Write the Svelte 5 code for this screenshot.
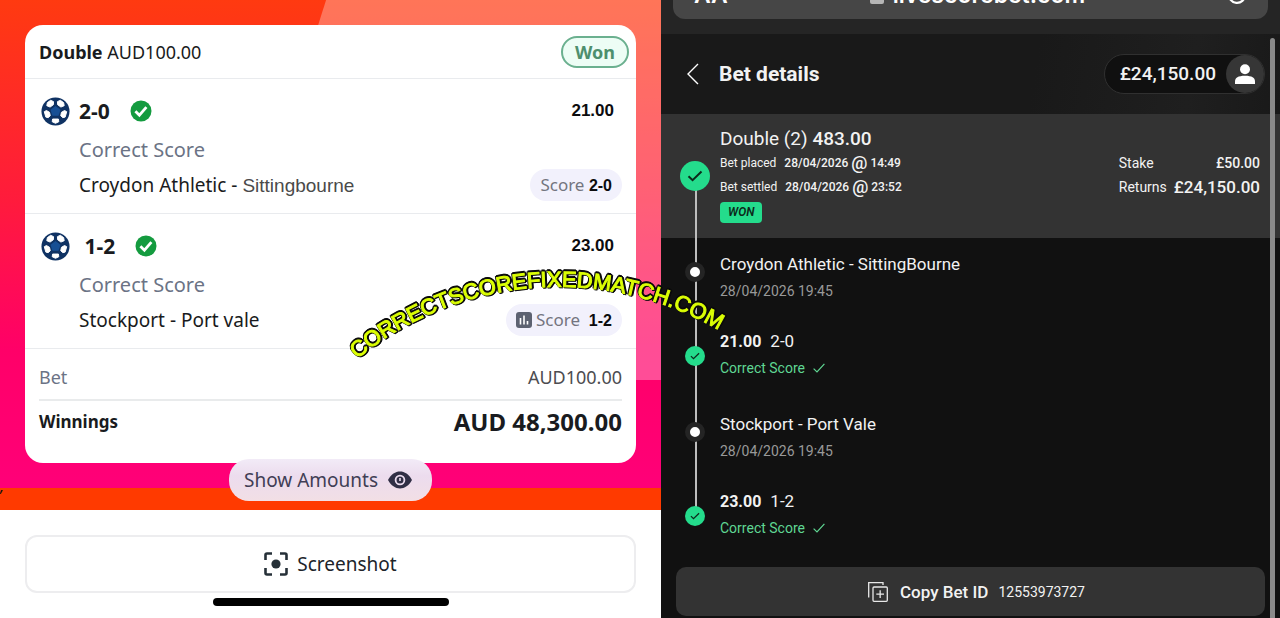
<script>
  const legs = [
    { pick: '2-0', odds: '21.00', home: 'Croydon Athletic -', away: 'Sittingbourne', score: '2-0', stats: false },
    { pick: '\u00a01-2', odds: '23.00', home: 'Stockport - Port vale', away: '', score: '\u00a01-2', stats: true }
  ];
  const events = [
    { name: 'Croydon Athletic - SittingBourne', time: '28/04/2026 19:45', odds: '21.00', pick: '2-0' },
    { name: 'Stockport - Port Vale', time: '28/04/2026 19:45', odds: '23.00', pick: '1-2' }
  ];
</script>

<main class="page">
  <section class="slip">
    <div class="stage">
      <span class="mark">,</span>
      <article class="card">
        <header class="card-head">
          <p><b>Double</b> AUD100.00</p>
          <span class="won">Won</span>
        </header>
        {#each legs as leg}
          <div class="leg">
            <div class="leg-top">
              <svg class="ball" viewBox="0 0 30 30" aria-hidden="true">
                <circle cx="15" cy="15" r="14.5" fill="#0f3263" />
                <g fill="#fff" stroke="#fff" stroke-width="1" stroke-linejoin="round">
                  <path d="M6.600 5.800 10 3.400 13 4.800 12.800 8 9.400 10.400 6 9Z" />
                  <path d="M23.400 5.800 20 3.400 17 4.800 17.200 8 20.600 10.400 24 9Z" />
                  <path d="M3.400 15.200 5.600 14 8.800 15.800 9.600 19.400 7.400 21.400 5 20.800Z" />
                  <path d="M26.600 15.200 24.400 14 21.200 15.800 20.400 19.400 22.600 21.400 25 20.800Z" />
                  <path d="M12 22.800H18L18.400 25.600 15 27.200 11.600 25.600Z" />
                </g>
                <path d="M15 9.400 20.200 13.200 18.200 19.400H11.800L9.800 13.200Z" fill="#174f94" />
              </svg>
              <strong class="pick">{leg.pick}</strong>
              <svg class="tick" viewBox="0 0 22 22" aria-hidden="true">
                <circle cx="11" cy="11" r="10.5" fill="#149b3f" />
                <path d="M5.400 11.200 9.400 15.200 16.400 7.200" fill="none" stroke="#fff" stroke-width="2.800" />
              </svg>
              <strong class="odds">{leg.odds}</strong>
            </div>
            <p class="market">Correct Score</p>
            <div class="leg-foot">
              <p class="teams">{leg.home} {#if leg.away}<span>{leg.away}</span>{/if}</p>
              <span class="score">
                {#if leg.stats}
                  <svg viewBox="0 0 16 16" aria-hidden="true">
                    <rect width="16" height="16" rx="3" fill="#5d6271" />
                    <path d="M4.500 6v6.500M8 3.500v9M11.500 9v3.500" stroke="#fff" stroke-width="1.600" />
                  </svg>
                {/if}
                <span>Score <b>{leg.score}</b></span>
              </span>
            </div>
          </div>
        {/each}
        <dl class="totals">
          <div class="bet"><dt>Bet</dt><dd>AUD100.00</dd></div>
          <div class="winnings"><dt>Winnings</dt><dd>AUD 48,300.00</dd></div>
        </dl>
      </article>
      <button class="amounts" type="button">
        Show Amounts
        <svg viewBox="0 0 24 18" aria-hidden="true">
          <path d="M0 9C3 3.200 7.500.6 12 .6S21 3.200 24 9c-3 5.800-7.500 8.400-12 8.400S3 14.800 0 9Z" fill="#302f45" />
          <circle cx="12" cy="9" r="4.400" fill="#302f45" stroke="#eadcee" stroke-width="1.800" />
          <path d="M12 7v3" stroke="#eadcee" stroke-width="1.600" />
        </svg>
      </button>
    </div>
    <footer class="actions">
      <button class="shot" type="button">
        <svg viewBox="0 0 24 24" aria-hidden="true">
          <path d="M1.500 8V3q0-1.500 1.500-1.500H8M16 1.500h5q1.500 0 1.500 1.500V8M22.500 16v5q0 1.500-1.500 1.500h-5M8 22.500H3q-1.500 0-1.500-1.500v-5" fill="none" stroke="#263038" stroke-width="2.600" />
          <circle cx="12" cy="12" r="4.600" fill="#263038" />
        </svg>
        Screenshot
      </button>
      <div class="home-bar"></div>
    </footer>
  </section>

  <section class="details">
    <div class="browser">
      <div class="address">
        <span>AA</span>
        <span class="host">
          <svg viewBox="0 0 14 18" aria-hidden="true">
            <path d="M3.500 8V5a3.500 3.500 0 0 1 7 0v3" fill="none" stroke="#b5b5b5" stroke-width="2" />
            <rect y="8" width="14" height="10" rx="2" fill="#b5b5b5" />
          </svg>
          livescorebet.com
        </span>
        <svg class="reload" viewBox="0 0 20 20" aria-hidden="true">
          <path d="M12 2.200A8 8 0 1 0 18 10" fill="none" stroke="#fff" stroke-width="2.200" />
        </svg>
      </div>
    </div>
    <header class="bar">
      <button class="back" type="button" aria-label="Back">
        <svg viewBox="0 0 12 22" aria-hidden="true"><path d="M11 1 1 11 11 21" fill="none" stroke="#fff" stroke-width="1.400" /></svg>
      </button>
      <h1>Bet details</h1>
      <button class="balance" type="button">
        £24,150.00
        <span class="avatar">
          <svg viewBox="0 0 20 20" aria-hidden="true">
            <circle cx="10" cy="5.300" r="5" fill="#fff" />
            <path d="M0 20v-2.500c0-3.600 3-5.700 10-5.700s10 2.100 10 5.700V20Z" fill="#fff" />
          </svg>
        </span>
      </button>
    </header>
    <div class="row summary">
      <span class="node big">
        <svg viewBox="0 0 16 12" aria-hidden="true"><path d="M1.500 6.200 5.600 10.200 14.500 1.500" fill="none" stroke="#0c2a1b" stroke-width="2" /></svg>
      </span>
      <div class="facts">
        <h2>Double (2) <b>483.00</b></h2>
        <p><span>Bet placed</span><b>28/04/2026 <i>@</i> 14:49</b></p>
        <p><span>Bet settled</span><b>28/04/2026 <i>@</i> 23:52</b></p>
        <em>WON</em>
      </div>
      <dl class="money">
        <dt>Stake</dt><dd>£50.00</dd>
        <dt>Returns</dt><dd class="large">£24,150.00</dd>
      </dl>
    </div>
    {#each events as ev}
      <div class="row event">
        <span class="node dot"></span>
        <div>
          <h3>{ev.name}</h3>
          <p class="time">{ev.time}</p>
        </div>
      </div>
      <div class="row outcome">
        <span class="node small">
          <svg viewBox="0 0 16 12" aria-hidden="true"><path d="M1.500 6.200 5.600 10.200 14.500 1.500" fill="none" stroke="#0c2a1b" stroke-width="2" /></svg>
        </span>
        <div>
          <h3><b>{ev.odds}</b>{ev.pick}</h3>
          <p class="result">
            Correct Score
            <svg viewBox="0 0 12 10" aria-hidden="true"><path d="M.6 5.600 4 9 11.400.8" fill="none" stroke="#5fd793" stroke-width="1.200" /></svg>
          </p>
        </div>
      </div>
    {/each}
    <button class="copy" type="button">
      <svg viewBox="0 0 20 20" aria-hidden="true">
        <path d="M.7 15.500V.7H15V3" fill="none" stroke="#e8e8e8" stroke-width="1.300" />
        <rect x="5" y="5" width="14.300" height="14.300" rx="1" fill="none" stroke="#e8e8e8" stroke-width="1.300" />
        <path d="M12.150 8.300v7.700M8.300 12.150h7.700" stroke="#e8e8e8" stroke-width="1.300" />
      </svg>
      <b>Copy Bet ID</b>
      <span>12553973727</span>
    </button>
    <div class="scroll"></div>
  </section>

  <svg class="banner" viewBox="0 0 400 110" aria-hidden="true">
    <path id="arc" d="M17 101A318 318 0 0 1 390 79" fill="none" />
    <text><textPath href="#arc">CORRECTSCOREFIXEDMATCH.COM</textPath></text>
  </svg>
</main>

<style>
  :global(body) { margin: 0; background: #111; }
  .page, .page * { box-sizing: border-box; }
  .page {
    position: relative;
    display: grid;
    grid-template-columns: 661fr 619fr;
    min-height: 100vh;
    overflow: hidden;
  }
  p, h1, h2, h3, dl, dd { margin: 0; }
  button { border: 0; padding: 0; font: inherit; color: inherit; cursor: pointer; }
  svg { display: block; flex: none; }

  .slip {
    display: flex;
    flex-direction: column;
    background: #fff;
    font-family: "Noto Sans", sans-serif;
    font-size: 18px;
    line-height: 24px;
    color: #191b20;
  }
  .stage {
    position: relative;
    display: flex;
    flex-direction: column;
    align-items: center;
    padding: 25px 25px 9px;
    background: linear-gradient(#ff3a10 0, #ff1b3c 200px, #ff0068 350px, #ff0078 488px, #ff3a00 488px);
  }
  .stage::before {
    content: "";
    position: absolute;
    inset: 0 0 130px 46%;
    background: rgba(255, 255, 255, 0.3);
    clip-path: polygon(22px 0, 100% 0, 100% 100%, 0 100%, 0 70px);
  }
  .mark {
    position: absolute;
    left: 0;
    bottom: 12px;
    color: #111;
    font-size: 16px;
    font-style: italic;
  }
  .card {
    position: relative;
    width: 100%;
    background: #fff;
    border-radius: 18px;
  }
  .card-head {
    display: flex;
    align-items: center;
    justify-content: space-between;
    height: 54px;
    padding: 0 7px 0 14px;
    border-bottom: 1px solid #e9ebee;
  }
  .won {
    padding: 0 12px;
    border: 2px solid #6bb08f;
    border-radius: 16px;
    background: #edfdf5;
    color: #4e8f6d;
    font-size: 18px;
    line-height: 28px;
    font-weight: 700;
  }
  .leg {
    height: 135px;
    padding: 16px 14px 0 54px;
    border-bottom: 1px solid #e9ebee;
  }
  .leg-top { display: flex; align-items: center; height: 32px; margin-left: -38px; }
  .ball { width: 29px; height: 29px; }
  .pick { margin: 0 20px 0 9px; font-family: "Open Sans", sans-serif; font-size: 21px; }
  .tick { width: 22px; height: 22px; }
  .odds { margin-left: auto; padding-right: 8px; font-family: "Liberation Sans", sans-serif; font-size: 17px; color: #0c0c0e; }
  .market { margin-top: 11px; color: #6b7385; font-size: 20px; }
  .leg-foot { display: flex; align-items: center; justify-content: space-between; height: 32px; margin-top: 7px; }
  .teams { font-size: 19px; }
  .teams span { font-family: "Liberation Sans", sans-serif; color: #4a4a4a; }
  .score {
    display: flex;
    align-items: center;
    gap: 4px;
    height: 32px;
    padding: 0 10px;
    border-radius: 16px;
    background: #f2f1fc;
    color: #74757f;
    font-size: 17px;
  }
  .score svg { width: 16px; height: 16px; }
  .score b { font-family: "Liberation Sans", sans-serif; font-size: 16px; color: #0c0c0e; }
  .totals { padding: 0 14px; }
  .totals div { display: flex; align-items: center; justify-content: space-between; }
  .bet { height: 52px; padding-top: 6px; border-bottom: 2px solid #e9ebec; }
  .bet dt { color: #6b7385; }
  .bet dd { color: #4c4c50; }
  .winnings { height: 62px; padding-bottom: 20px; font-weight: 700; font-size: 17px; }
  .winnings dd { font-size: 24px; }
  .amounts {
    position: relative;
    display: flex;
    align-items: center;
    gap: 10px;
    height: 42px;
    margin-top: -4px;
    padding: 0 20px 0 15px;
    border-radius: 20px;
    background: linear-gradient(#f2ebf7, #ecdcee 40%, #f2dfe5);
    color: #413e55;
    font-size: 19px;
  }
  .amounts svg { width: 24px; height: 18px; }
  .actions { display: flex; flex-direction: column; align-items: center; padding: 25px 25px 12px; }
  .shot {
    display: flex;
    align-items: center;
    justify-content: center;
    gap: 9px;
    width: 100%;
    height: 58px;
    border: 2px solid #ededef;
    border-radius: 12px;
    background: #fff;
    color: #20242a;
    font-size: 19px;
  }
  .shot svg { width: 24px; height: 24px; }
  .home-bar { width: 236px; height: 8px; margin-top: 5px; border-radius: 4px; background: #000; }

  .details {
    position: relative;
    display: flex;
    flex-direction: column;
    background: #111;
    color: #f2f2f2;
    font-family: Roboto, sans-serif;
    font-size: 17px;
    line-height: 24px;
  }
  .browser { height: 34px; padding: 0 12px; overflow: hidden; background: #252525; }
  .address {
    display: flex;
    align-items: center;
    justify-content: space-between;
    height: 49px;
    margin-top: -30px;
    padding: 0 21px;
    border-radius: 12px;
    background: #464646;
    color: #fff;
    font: 600 23px/24px Inter, sans-serif;
  }
  .host { display: flex; align-items: center; gap: 9px; }
  .host svg { width: 14px; height: 18px; }
  .reload { width: 20px; height: 20px; }
  .bar {
    display: flex;
    align-items: center;
    height: 80px;
    padding: 0 15px 0 26px;
    background: linear-gradient(100deg, #191919 60%, #1f1f1f 85%, #191919);
  }
  .back { background: none; }
  .back svg { width: 12px; height: 22px; }
  h1 { margin-left: 20px; font-size: 21px; line-height: 28px; font-weight: 700; }
  .balance {
    display: flex;
    align-items: center;
    gap: 10px;
    height: 40px;
    margin-left: auto;
    padding-left: 15px;
    border: 1px solid #303030;
    border-radius: 20px;
    background: #101010;
    font-size: 19px;
    font-weight: 500;
  }
  .avatar { display: grid; place-items: center; width: 38px; height: 38px; border-radius: 50%; background: #363636; }
  .avatar svg { width: 20px; height: 20px; }

  .row {
    position: relative;
    display: grid;
    grid-template-columns: 30px 1fr auto;
    column-gap: 10px;
    padding: 0 20px 0 19px;
  }
  .row::before {
    content: "";
    position: absolute;
    left: 34px;
    top: 0;
    bottom: 0;
    width: 2px;
    background: #bdbdbd;
  }
  .node { position: relative; display: grid; place-items: center; justify-self: center; border-radius: 50%; background: #24dc8c; }
  .summary { height: 124px; padding-top: 13px; background: #333; }
  .summary::before { top: 62px; }
  .big { width: 30px; height: 30px; margin-top: 34px; }
  .big svg { width: 16px; height: 12px; }
  .small { width: 20px; height: 20px; margin-top: 28px; }
  .small svg { width: 10px; height: 8px; }
  .dot { width: 20px; height: 20px; margin-top: 24px; border: 5px solid #242424; background: #fff; }
  .facts h2 { font-size: 19px; font-weight: 400; }
  .facts b { font-weight: 500; }
  .facts p { display: flex; align-items: center; gap: 8px; font-size: 12px; line-height: 24px; }
  .facts p b { display: flex; align-items: center; gap: 3px; }
  .facts p i { font: 500 18px/24px Roboto, sans-serif; }
  .facts em {
    display: inline-block;
    margin-top: 3px;
    padding: 0 8px;
    border-radius: 4px;
    background: #24dc8c;
    color: #0c2a1b;
    font-size: 12px;
    line-height: 21px;
    font-weight: 600;
    vertical-align: top;
  }
  .money { display: grid; grid-template-columns: auto auto; column-gap: 7px; align-content: start; padding-top: 24px; font-size: 14px; }
  .money dd { text-align: right; font-weight: 500; }
  .money .large { font-size: 17px; }
  .event, .outcome { height: 80px; }
  .event > div { padding-top: 14px; }
  .outcome > div { padding-top: 11px; }
  h3 { font-size: 17px; font-weight: 400; }
  h3 b { margin-right: 9px; font-size: 16px; font-weight: 700; }
  .time { margin-top: 3px; color: #999; font-size: 14px; }
  .result { display: flex; align-items: center; gap: 8px; margin-top: 2px; color: #5fd793; font-size: 14px; }
  .result svg { width: 12px; height: 10px; }
  .outcome:nth-last-child(3)::before { bottom: 42px; }
  .copy {
    display: flex;
    align-items: center;
    justify-content: center;
    gap: 10px;
    height: 49px;
    margin: 9px 15px 2px;
    padding-left: 12px;
    border-radius: 10px;
    background: #333;
  }
  .copy svg { width: 20px; height: 20px; margin-right: 2px; }
  .copy b { font-weight: 500; }
  .copy span { font-size: 14px; }
  .scroll { position: absolute; top: 38px; right: 5px; bottom: 0; width: 5px; border-radius: 3px 3px 0 0; background: #8a8a8a; }

  .banner { position: absolute; left: 340px; top: 258px; width: 400px; height: 110px; overflow: visible; pointer-events: none; }
  .banner text {
    fill: #dcff05;
    stroke: #dcff05;
    stroke-width: 1px;
    font: 22px "Liberation Sans", sans-serif;
    filter: drop-shadow(1px 1px #0a0a0a) drop-shadow(-1px -1px #0a0a0a) drop-shadow(1px -1px #0a0a0a);
  }
</style>
